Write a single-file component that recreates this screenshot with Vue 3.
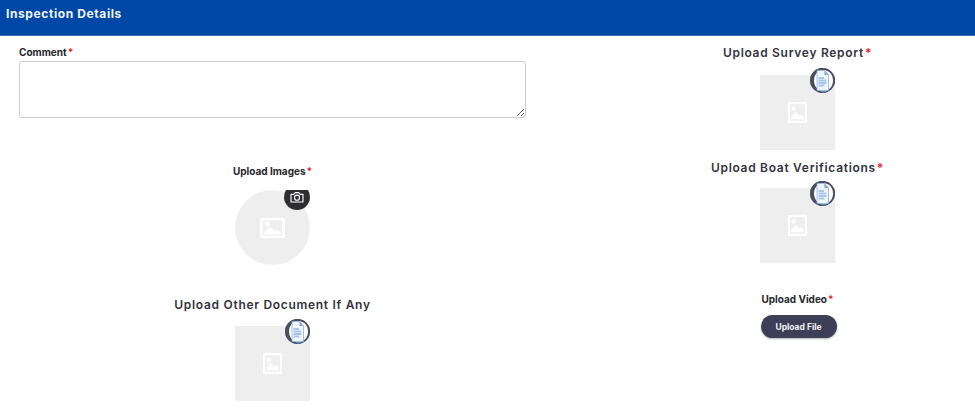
<script setup>
const leftUploads = [
  { label: 'Upload Images', required: true, round: true, small: true },
  { label: 'Upload Other Document If Any', required: false, round: false, small: false }
]
const rightUploads = [
  { label: 'Upload Survey Report', required: true },
  { label: 'Upload Boat Verifications', required: true }
]
</script>

<template>
  <div class="page">
    <header class="head">Inspection Details</header>
    <div class="body">
      <section class="col-left">
        <label class="small-label comment-label">Comment<span class="req">*</span></label>
        <textarea class="comment"></textarea>

        <div
          v-for="item in leftUploads"
          :key="item.label"
          class="upload"
          :class="item.round ? 'upload-images' : 'upload-other'"
        >
          <div :class="item.small ? 'small-label' : 'big-label'">
            {{ item.label }}<span v-if="item.required" class="req">*</span>
          </div>
          <div class="thumb" :class="{ round: item.round }">
            <svg class="ph" viewBox="0 0 20 20" preserveAspectRatio="none">
              <path fill="#fff" fill-rule="evenodd" d="M0 0h20v20H0zM2.200 2.200v15.600h15.600V2.200zM3.500 16.500V14l4.500-5 4 4 2-1.500 2.500 2.500v2.500zM6 4a2.200 2.200 0 1 0 .01 0z" />
            </svg>
            <div v-if="item.round" class="camera-clip">
              <div class="camera">
                <svg viewBox="0 0 24 24" width="16" height="16" fill="none" stroke="#fff" stroke-width="1.7">
                  <path d="M3 8h4.500l1.500-2.500h6L16.500 8H21v11.500H3z" stroke-linejoin="round" />
                  <circle cx="12" cy="13" r="3.800" />
                </svg>
              </div>
            </div>
            <div v-else class="doc-badge">
              <svg viewBox="0 0 25 25" width="25" height="25">
                <path fill="#f1f6fc" stroke="#7ea6d9" stroke-width=".7" d="M7 2.500h7.500l4 4.500v15.500H7z" />
                <path fill="#7ea6d9" d="M14.500 2.500l4 4.500h-4z" />
                <path fill="#a9c5e8" d="M8.500 9h5.500v2H8.500zM8.500 11.500h8v2h-8zM8.500 14h8v2h-8zM8.500 16.500h6v2h-6z" />
              </svg>
            </div>
          </div>
        </div>
      </section>

      <section class="col-right">
        <div v-for="item in rightUploads" :key="item.label" class="upload right-upload">
          <div class="big-label">{{ item.label }}<span class="req">*</span></div>
          <div class="thumb">
            <svg class="ph" viewBox="0 0 20 20" preserveAspectRatio="none">
              <path fill="#fff" fill-rule="evenodd" d="M0 0h20v20H0zM2.200 2.200v15.600h15.600V2.200zM3.500 16.500V14l4.500-5 4 4 2-1.500 2.500 2.500v2.500zM6 4a2.200 2.200 0 1 0 .01 0z" />
            </svg>
            <div class="doc-badge">
              <svg viewBox="0 0 25 25" width="25" height="25">
                <path fill="#f1f6fc" stroke="#7ea6d9" stroke-width=".7" d="M7 2.500h7.500l4 4.500v15.500H7z" />
                <path fill="#7ea6d9" d="M14.500 2.500l4 4.500h-4z" />
                <path fill="#a9c5e8" d="M8.500 9h5.500v2H8.500zM8.500 11.500h8v2h-8zM8.500 14h8v2h-8zM8.500 16.500h6v2h-6z" />
              </svg>
            </div>
          </div>
        </div>
        <div class="upload video">
          <div class="small-label">Upload Video<span class="req">*</span></div>
          <button class="file-btn">Upload File</button>
        </div>
      </section>
    </div>
  </div>
</template>

<style>
html, body { margin: 0; background: #fff; overflow: hidden; }
</style>

<style scoped>
.page {
  width: 975px;
  height: 408px;
  overflow: hidden;
  font-family: Inter, "Liberation Sans", sans-serif;
  color: #2b2b33;
}
.head {
  height: 36px;
  box-sizing: border-box;
  background: #0047a6;
  border-bottom: 1px solid #3b6fae;
  color: #f2f5fb;
  font-size: 12px;
  font-weight: 700;
  letter-spacing: .6px;
  line-height: 14px;
  padding: 7px 0 0 6px;
}
.body {
  display: grid;
  grid-template-columns: 545px 75px 355px;
}
.col-left { grid-column: 1; padding: 4px 0 0 19px; }
.col-right { grid-column: 3; }
.small-label {
  font-size: 10px;
  font-weight: 700;
  line-height: 12px;
  color: #26262c;
}
.big-label {
  font-size: 12px;
  font-weight: 600;
  line-height: 14px;
  letter-spacing: .7px;
  color: #33333b;
}
.req { color: #f01c2c; margin-left: 1px; }
.comment {
  display: block;
  box-sizing: border-box;
  width: 507px;
  height: 57px;
  margin: 1px 0 0;
  border: 1px solid #c9ccd1;
  border-radius: 3px;
  background: #fff;
  outline: none;
}
.upload {
  display: flex;
  flex-direction: column;
  align-items: center;
}
.upload-images { width: 507px; margin-top: 47px; }
.upload-images .thumb { margin-top: 13px; }
.upload-images .ph { width: 25px; height: 20px; }
.upload-other { width: 507px; margin-top: 33px; }
.upload-other .thumb { margin-top: 14px; }
.thumb {
  position: relative;
  width: 75px;
  height: 75px;
  margin-top: 15px;
  background: #efeeef;
  display: flex;
  align-items: center;
  justify-content: center;
}
.thumb.round { border-radius: 50%; }
.ph { width: 19px; height: 21px; }
.doc-badge {
  position: absolute;
  top: -7px;
  right: 0;
  width: 25px;
  height: 25px;
  border-radius: 50%;
  background: #fff;
  box-shadow: inset 4px 0 0 #4a4f5e, inset 0 2px 0 #4a4f5e, inset -2px 0 0 #4a4f5e, inset 0 -2px 0 #5f8dc6;
  overflow: hidden;
}
.doc-badge svg { display: block; }
.camera-clip {
  position: absolute;
  top: 0;
  right: 0;
  width: 26px;
  height: 20px;
  overflow: hidden;
}
.camera {
  width: 26px;
  height: 26px;
  margin-top: -6px;
  border-radius: 50%;
  background: #2e2e30;
  display: flex;
  align-items: center;
  justify-content: center;
}
.right-upload:first-child { padding-top: 10px; }
.right-upload + .right-upload { margin-top: 11px; }
.right-upload + .right-upload .thumb { margin-top: 13px; }
.video { margin-top: 30px; }
.file-btn {
  width: 76px;
  height: 23px;
  margin: 10px 0 0 2px;
  border: 0;
  padding: 0;
  border-radius: 12px;
  background: #3d3f58;
  color: #f2f2f5;
  font-family: inherit;
  font-size: 8.500px;
  font-weight: 700;
  box-shadow: 0 1px 2px rgba(0, 0, 0, .3);
}
</style>
